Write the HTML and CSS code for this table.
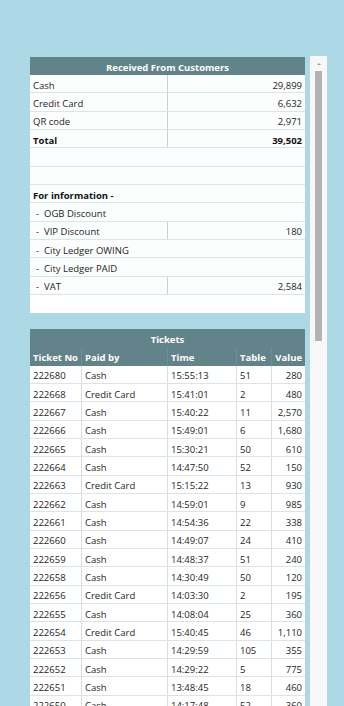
FILE: index.html
```html
<!DOCTYPE html>
<html>
<head>
<meta charset="utf-8">
<link rel="stylesheet" href="styles.css">
</head>
<body>
<div class="page">
  <div class="content">
    <section class="panel summary">
      <div class="title">Received From Customers</div>
      <div class="row split"><span class="lbl">Cash</span><span class="val">29,899</span></div>
      <div class="row split"><span class="lbl">Credit Card</span><span class="val">6,632</span></div>
      <div class="row split"><span class="lbl">QR code</span><span class="val">2,971</span></div>
      <div class="row split bold"><span class="lbl">Total</span><span class="val">39,502</span></div>
      <div class="row"></div>
      <div class="row"></div>
      <div class="row bold"><span class="lbl">For information -</span></div>
      <div class="row"><span class="lbl"><span class="dash">-</span>OGB Discount</span></div>
      <div class="row split"><span class="lbl"><span class="dash">-</span>VIP Discount</span><span class="val">180</span></div>
      <div class="row"><span class="lbl"><span class="dash">-</span>City Ledger OWING</span></div>
      <div class="row"><span class="lbl"><span class="dash">-</span>City Ledger PAID</span></div>
      <div class="row split"><span class="lbl"><span class="dash">-</span>VAT</span><span class="val">2,584</span></div>
      <div class="spacer"></div>
    </section>

    <section class="panel tickets">
      <div class="title">Tickets</div>
      <div class="trow head">
        <span>Ticket No</span><span>Paid by</span><span>Time</span><span>Table</span><span class="num">Value</span>
      </div>
      <div class="trow"><span>222680</span><span>Cash</span><span>15:55:13</span><span>51</span><span class="num">280</span></div>
      <div class="trow"><span>222668</span><span>Credit Card</span><span>15:41:01</span><span>2</span><span class="num">480</span></div>
      <div class="trow"><span>222667</span><span>Cash</span><span>15:40:22</span><span>11</span><span class="num">2,570</span></div>
      <div class="trow"><span>222666</span><span>Cash</span><span>15:49:01</span><span>6</span><span class="num">1,680</span></div>
      <div class="trow"><span>222665</span><span>Cash</span><span>15:30:21</span><span>50</span><span class="num">610</span></div>
      <div class="trow"><span>222664</span><span>Cash</span><span>14:47:50</span><span>52</span><span class="num">150</span></div>
      <div class="trow"><span>222663</span><span>Credit Card</span><span>15:15:22</span><span>13</span><span class="num">930</span></div>
      <div class="trow"><span>222662</span><span>Cash</span><span>14:59:01</span><span>9</span><span class="num">985</span></div>
      <div class="trow"><span>222661</span><span>Cash</span><span>14:54:36</span><span>22</span><span class="num">338</span></div>
      <div class="trow"><span>222660</span><span>Cash</span><span>14:49:07</span><span>24</span><span class="num">410</span></div>
      <div class="trow"><span>222659</span><span>Cash</span><span>14:48:37</span><span>51</span><span class="num">240</span></div>
      <div class="trow"><span>222658</span><span>Cash</span><span>14:30:49</span><span>50</span><span class="num">120</span></div>
      <div class="trow"><span>222656</span><span>Credit Card</span><span>14:03:30</span><span>2</span><span class="num">195</span></div>
      <div class="trow"><span>222655</span><span>Cash</span><span>14:08:04</span><span>25</span><span class="num">360</span></div>
      <div class="trow"><span>222654</span><span>Credit Card</span><span>15:40:45</span><span>46</span><span class="num">1,110</span></div>
      <div class="trow"><span>222653</span><span>Cash</span><span>14:29:59</span><span>105</span><span class="num">355</span></div>
      <div class="trow"><span>222652</span><span>Cash</span><span>14:29:22</span><span>5</span><span class="num">775</span></div>
      <div class="trow"><span>222651</span><span>Cash</span><span>13:48:45</span><span>18</span><span class="num">460</span></div>
      <div class="trow"><span>222650</span><span>Cash</span><span>14:17:48</span><span>52</span><span class="num">360</span></div>
    </section>
  </div>
  <div class="scrollbar">
    <div class="arrow"></div>
    <div class="thumb"></div>
  </div>
</div>
</body>
</html>
```
FILE: styles.css
```css
html, body {
  margin: 0;
  padding: 0;
  height: 706px;
  overflow: hidden;
  background: #add8e6;
}
body {
  font-family: "Open Sans", "Noto Sans", sans-serif;
  font-size: 9.5px;
  color: #252423;
}
.page {
  display: flex;
  align-items: flex-start;
  padding: 57px 0 0 30px;
}
.content {
  width: 275px;
  display: flex;
  flex-direction: column;
  gap: 16px;
}
.panel {
  background: #ffffff;
}
.title {
  height: 18px;
  box-sizing: border-box;
  padding-top: 2px;
  background: #628389;
  color: #fff;
  font-weight: 700;
  display: flex;
  align-items: center;
  justify-content: center;
}
.row {
  height: 18.33px;
  box-sizing: border-box;
  border-bottom: 1px solid #d8e6ec;
  display: grid;
  grid-template-columns: 137px 138px;
  align-items: center;
  background: #fcfdfd;
}
.row.bold {
  font-weight: 700;
  color: #111;
}
.lbl {
  padding: 3px 0 0 3px;
  white-space: nowrap;
}
.val {
  align-self: stretch;
  display: flex;
  align-items: center;
  justify-content: flex-end;
  padding: 3px 3px 0 0;
  border-left: 1px solid #c5d2d7;
}
.dash {
  display: inline-block;
  margin-left: 3px;
  width: 8px;
}
.spacer {
  height: 18px;
}
.tickets .title {
  height: 18.33px;
}
.trow {
  height: 18.33px;
  box-sizing: border-box;
  display: grid;
  grid-template-columns: 51px 86px 69px 35px 34px;
  border-bottom: 1px solid #d8e6ec;
  background: #fff;
}
.trow span {
  display: flex;
  align-items: center;
  padding: 3px 0 0 3px;
  border-left: 1px solid #d3dfe4;
  white-space: nowrap;
}
.trow span:first-child {
  border-left: none;
}
.trow .num {
  justify-content: flex-end;
  padding-left: 0;
  padding-right: 3px;
}
.trow.head {
  background: #628389;
  color: #fff;
  font-weight: 700;
  border-bottom: none;
}
.trow.head span {
  border-left: 1px solid #6e8e94;
}
.trow.head span:first-child {
  border-left: none;
}
.scrollbar {
  width: 17px;
  height: 660px;
  margin-left: 5px;
  margin-top: -1px;
  background: #f8f8f8;
  display: flex;
  flex-direction: column;
  align-items: center;
}
.arrow {
  margin-top: 7px;
  width: 0;
  height: 0;
  border-left: 2px solid transparent;
  border-right: 2px solid transparent;
  border-bottom: 2px solid #a0a0a0;
}
.thumb {
  margin-top: 6px;
  width: 7px;
  height: 270px;
  background: #b3b3b3;
}
```
